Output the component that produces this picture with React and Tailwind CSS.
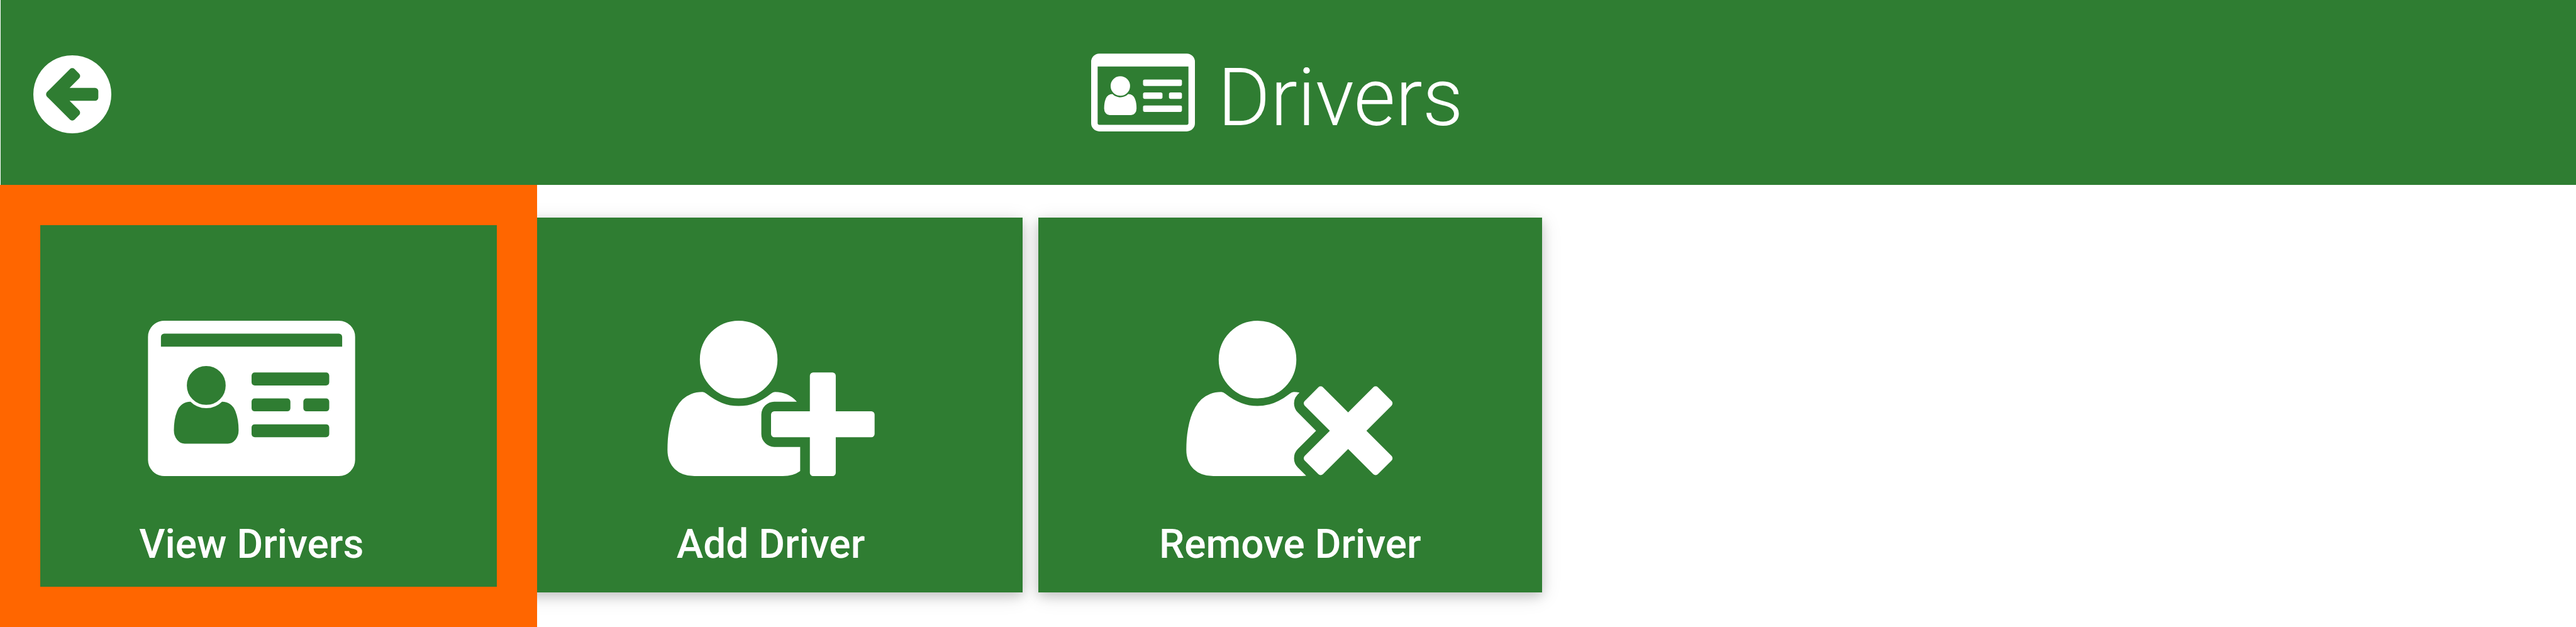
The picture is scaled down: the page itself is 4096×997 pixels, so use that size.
const USER =
  "M704 896q-159 0-271.500-112.500t-112.500-271.500 112.500-271.500 271.500-112.500 271.500 112.500 112.500 271.500-112.500 271.500-271.500 112.500z";

const BADGE =
  "M896 1212q0-54-7.500-100.500t-24.500-90-51-68.500-81-25q-64 64-156 64t-156-64q-47 0-81 25t-51 68.500-24.500 90-7.500 100.500q0 55 31.500 93.500t75.500 38.500h426q44 0 75.500-38.500t31.500-93.500zM768 768q0-80-56-136t-136-56-136 56-56 136 56 136 136 56 136-56 56-136zM1792 1248v-64q0-14-9-23t-23-9h-704q-14 0-23 9t-9 23v64q0 14 9 23t23 9h704q14 0 23-9t9-23zM1408 992v-64q0-14-9-23t-23-9h-320q-14 0-23 9t-9 23v64q0 14 9 23t23 9h320q14 0 23-9t9-23zM1792 992v-64q0-14-9-23t-23-9h-192q-14 0-23 9t-9 23v64q0 14 9 23t23 9h192q14 0 23-9t9-23zM1792 736v-64q0-14-9-23t-23-9h-704q-14 0-23 9t-9 23v64q0 14 9 23t23 9h704q14 0 23-9t9-23z";

const CARD_EDGE =
  "M2048 288v1216q0 66-47 113t-113 47h-1728q-66 0-113-47t-47-113v-1216q0-66 47-113t113-47h1728q66 0 113 47t47 113z";

const ICONS = {
  view: BADGE + "M1920 384v-96q0-13-9.500-22.500t-22.500-9.500h-1728q-13 0-22.500 9.500t-9.500 22.500v96z" + CARD_EDGE,
  outline: BADGE + "M128 1504v-1120h1792v1120q0 13-9.500 22.500t-22.500 9.500h-1728q-13 0-22.500-9.500t-9.500-22.500z" + CARD_EDGE,
  add:
    USER +
    "m960 128h352q13 0 22.500 9.500t9.500 22.500v192q0 13-9.500 22.500t-22.500 9.500h-352v352q0 13-9.500 22.500t-22.500 9.500h-192q-13 0-22.500-9.500t-9.500-22.500v-352h-352q-13 0-22.500-9.500t-9.500-22.500v-192q0-13 9.500-22.500t22.500-9.500h352v-352q0-13 9.500-22.500t22.500-9.500h192q13 0 22.500 9.500t9.500 22.500v352zm-736 224q0 52 38 90t90 38h256v238q-68 50-171 50h-874q-121 0-194-69t-73-190q0-53 3.500-103.500t14-109 26.500-108.500 43-97.500 62-81 85.500-53.500 111.500-20q19 0 39 17 79 61 154.500 91.500t164.500 30.500 164.500-30.500 154.500-91.500q20-17 39-17 132 0 217 96h-223q-52 0-90 38t-38 90v192z",
  remove:
    USER +
    "m1077 320l249 249q9 9 9 23 0 13-9 22l-136 136q-9 9-22 9-14 0-23-9l-249-249-249 249q-9 9-23 9-13 0-22-9l-136-136q-9-9-9-22 0-14 9-23l249-249-249-249q-9-9-9-23 0-13 9-22l136-136q9-9 22-9 14 0 23 9l249 249 249-249q9-9 23-9 13 0 22 9l136 136q9 9 9 22 0 14-9 23zm-498 0l-181 181q-37 37-37 91 0 53 37 90l83 83q-21 3-44 3h-874q-121 0-194-69t-73-190q0-53 3.500-103.500t14-109 26.500-108.500 43-97.500 62-81 85.500-53.500 111.500-20q19 0 39 17 154 122 319 122t319-122q20-17 39-17 28 0 57 6-28 27-41 50t-13 56q0 54 37 91z",
};

const BACK =
  "M1408 960v-128q0-26-19-45t-45-19h-502l189-189q19-19 19-45t-19-45l-91-91q-18-18-45-18t-45 18l-362 362-91 91q-18 18-18 45t18 45l91 91 362 362q18 18 45 18t45-18l91-91q18-18 18-45t-18-45l-189-189h502q26 0 45-19t19-45zm256-64q0 209-103 385.500t-279.500 279.500-385.500 103-385.500-103-279.500-279.500-103-385.500 103-385.500 279.500-279.500 385.500-103 385.500 103 279.500 279.500 103 385.500z";

function Icon({ d, className }) {
  return (
    <svg viewBox="0 128 2048 1536" fill="currentColor" fillRule="evenodd" className={className} aria-hidden="true">
      <path d={d} />
    </svg>
  );
}

function Tile({ icon, label }) {
  return (
    <button className="flex h-[596px] w-[800.5px] flex-col items-center bg-[#2f7d32] pt-[164px] text-white shadow-[0_6px_16px_rgba(0,0,0,0.16),0_6px_31px_rgba(0,0,0,0.12)]">
      <Icon d={ICONS[icon]} className="h-[247px] w-[330px]" />
      <span className="mt-[69px] text-[64px] leading-[80px] font-medium">{label}</span>
    </button>
  );
}

export default function App() {
  return (
    <div className="relative h-[997px] w-[4096px] overflow-hidden bg-white font-['Roboto',sans-serif]">
      <header className="ml-px grid h-[294px] grid-cols-[1734px_auto] items-start bg-[#2f7d32] text-white">
        <button className="mt-[88px] ml-[51.5px] h-[124px] w-[124px]" aria-label="Back">
          <svg viewBox="128 128 1536 1536" fill="currentColor" fillRule="evenodd" className="h-[124px] w-[124px]">
            <path d={BACK} />
          </svg>
        </button>
        <h1 className="flex items-start gap-[36px]">
          <Icon d={ICONS.outline} className="mt-[85px] h-[124px] w-[165px]" />
          <span className="mt-[80px] text-[128px] leading-[150px] font-light">Drivers</span>
        </h1>
      </header>
      <main className="-ml-[0.5px] flex gap-[25.3px] pt-[52px]">
        <Tile icon="view" label="View Drivers" />
        <Tile icon="add" label="Add Driver" />
        <Tile icon="remove" label="Remove Driver" />
      </main>
      <div className="absolute top-[294px] left-0 h-[703px] w-[854px] border-[64px] border-[#ff6600]" />
    </div>
  );
}
